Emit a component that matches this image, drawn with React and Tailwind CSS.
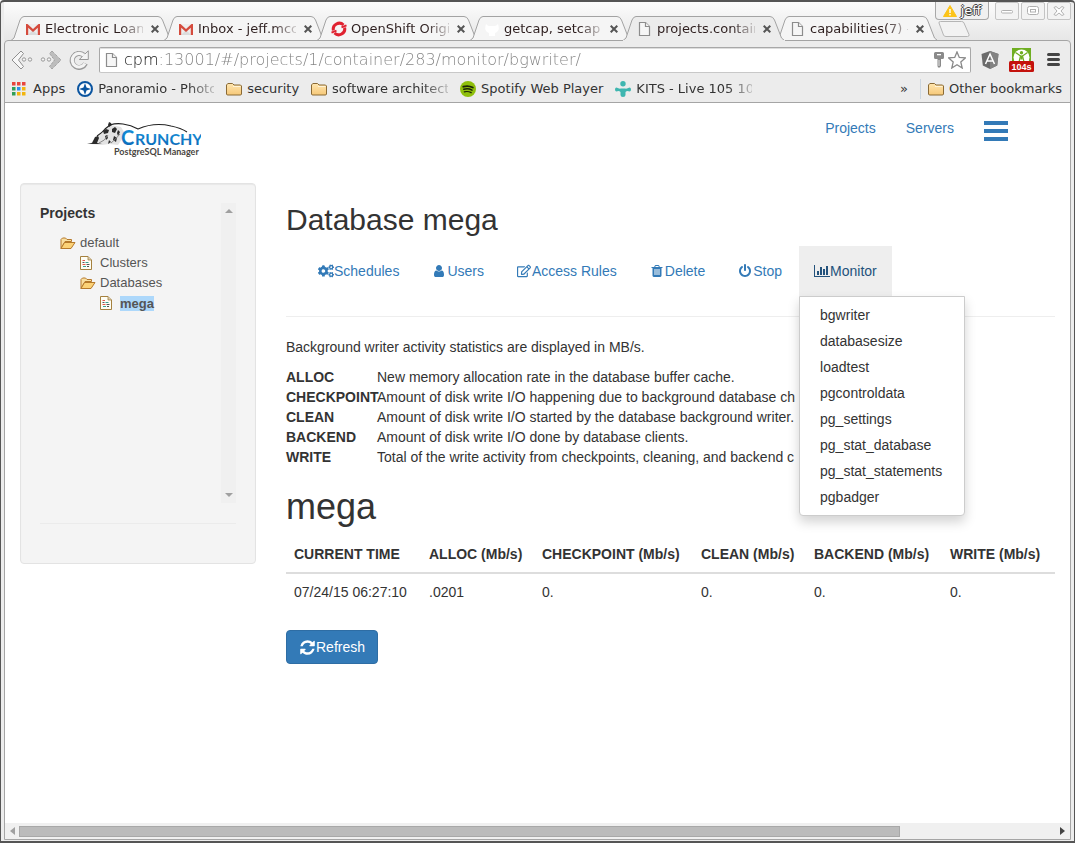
import React from "react";
import { FaCogs, FaRegEdit } from "react-icons/fa";

const UI = "font-['DejaVu_Sans',sans-serif]";

function FontIcon({ path, box = "0 0 1792 1792", className = "size-[14px]" }) {
  return (
    <svg viewBox={box} className={className} fill="currentColor" aria-hidden="true">
      <path d={path} />
    </svg>
  );
}

const USER =
  "M1536 1399q0 109-62.5 187t-150.5 78h-854q-88 0-150.5-78t-62.5-187q0-85 8.5-160.5t31.5-152 58.5-131 94-89 134.5-34.5q131 128 313 128t313-128q76 0 134.5 34.5t94 89 58.5 131 31.5 152 8.5 160.5zm-256-887q0 159-112.5 271.5t-271.5 112.5-271.5-112.5-112.5-271.5 112.5-271.5 271.5-112.5 271.5 112.5 112.5 271.5z";
const TRASH =
  "M704 1376v-704q0-14-9-23t-23-9h-64q-14 0-23 9t-9 23v704q0 14 9 23t23 9h64q14 0 23-9t9-23zm256 0v-704q0-14-9-23t-23-9h-64q-14 0-23 9t-9 23v704q0 14 9 23t23 9h64q14 0 23-9t9-23zm256 0v-704q0-14-9-23t-23-9h-64q-14 0-23 9t-9 23v704q0 14 9 23t23 9h64q14 0 23-9t9-23zm-544-992h448l-48-117q-7-9-17-11h-317q-10 2-17 11zm928 32v64q0 14-9 23t-23 9h-96v948q0 83-47 143.5t-113 60.5h-832q-66 0-113-58.5t-47-141.5v-952h-96q-14 0-23-9t-9-23v-64q0-14 9-23t23-9h309l70-167q15-37 54-63t79-26h320q40 0 79 26t54 63l70 167h309q14 0 23 9t9 23z";
const POWER =
  "M1664 896q0 156-61 298t-164 245-245 164-298 61-298-61-245-164-164-245-61-298q0-182 80.5-343t226.5-270q43-32 95.5-25t83.5 50q32 42 24.5 94.5t-49.5 84.5q-98 74-151.5 181t-53.5 228q0 104 40.5 198.5t109.5 163.5 163.5 109.5 198.5 40.5 198.5-40.5 163.5-109.5 109.5-163.5 40.5-198.5q0-121-53.5-228t-151.5-181q-42-32-49.5-84.5t24.5-94.5q31-43 84-50t95 25q146 109 226.5 270t80.5 343zm-640-768v640q0 52-38 90t-90 38-90-38-38-90v-640q0-52 38-90t90-38 90 38 38 90z";
const CHART =
  "M640 896v512h-256v-512h256zm384-512v1024h-256v-1024h256zm1024 1152v128h-2048v-1536h128v1408h1920zm-640-896v768h-256v-768h256zm384-384v1152h-256v-1152h256z";
const REFRESH =
  "M1639 1056q0 5-1 7-64 268-268 434.5t-478 166.5q-146 0-282.5-55t-243.5-157l-129 129q-19 19-45 19t-45-19-19-45v-448q0-26 19-45t45-19h448q26 0 45 19t19 45-19 45l-137 137q71 66 161 102t187 36q134 0 250-65t186-179q11-17 53-117 8-23 30-23h192q13 0 22.5 9.5t9.5 22.5zm25-800v448q0 26-19 45t-45 19h-448q-26 0-45-19t-19-45 19-45l138-138q-148-137-349-137-134 0-250 65t-186 179q-11 17-53 117-8 23-30 23h-199q-13 0-22.5-9.5t-9.5-22.5v-7q65-268 270-434.5t480-166.5q146 0 284 55.5t245 156.5l130-129q19-19 45-19t45 19 19 45z";

/* ---------- browser icons ---------- */

function Gmail() {
  return (
    <svg viewBox="0 0 16 16" className="size-4" aria-hidden="true">
      <path d="M1 3h14v11H1z" fill="#eee" />
      <path d="M3 14 8 9l5 5z" fill="#dcdcdc" />
      <path d="M1 14V3h1.5L8 8l5.5-5H15v11h-2.2V6.800L8 11 3.200 6.800V14z" fill="#d54b3d" />
    </svg>
  );
}

function OpenShift() {
  return (
    <svg viewBox="0 0 16 16" className="size-4" fill="none" stroke="#e02230" strokeWidth="3" aria-hidden="true">
      <path d="M2.4 9.5A6 6 0 0 1 12.5 4" />
      <path d="M13.6 6.5A6 6 0 0 1 3.5 12" />
      <path d="m10.5 6.4 5-2M.5 11.6l5-2" strokeWidth="2" />
    </svg>
  );
}

function Ghost() {
  return (
    <svg viewBox="0 0 16 16" className="size-4" aria-hidden="true">
      <path d="M2 3q2 2 3 2h6q1 0 3-2 2 5-1 8l-2 1v3H5v-3l-2-1Q0 8 2 3Z" fill="#fff" />
    </svg>
  );
}

function Page() {
  return (
    <svg viewBox="0 0 16 16" className="size-4 shrink-0" fill="#f6f6f6" stroke="#8c8c8c" strokeWidth="1.2" aria-hidden="true">
      <path d="M2.5 1.5h6l4 4v9h-10z" />
      <path d="M8.5 1.5v4h4" />
    </svg>
  );
}

function Folder() {
  return (
    <svg viewBox="0 0 16 16" className="size-4 shrink-0" aria-hidden="true">
      <defs>
        <linearGradient id="folderFill" x1="0" y1="0" x2="0" y2="1">
          <stop offset="0" stopColor="#ffe6b0" />
          <stop offset="1" stopColor="#f6c878" />
        </linearGradient>
      </defs>
      <path d="M.5 13V4l1.3-1.5h4.7L8 4h6.5l1 1v8l-.7 1H1.2z" fill="url(#folderFill)" stroke="#8a6a35" />
      <path d="M7 5.5h7.5" stroke="#fff3d6" />
    </svg>
  );
}

function AppsGrid() {
  const colors = ["#e8453c", "#e8453c", "#e8453c", "#2f9e58", "#2b8fe8", "#f2b50f", "#2f9e58", "#f2b50f", "#f2b50f"];
  return (
    <svg viewBox="0 0 16 14" className="h-[14px] w-4" aria-hidden="true">
      {colors.map((c, i) => (
        <rect key={i} x={(i % 3) * 5} y={Math.floor(i / 3) * 5} width="3.5" height="3.5" fill={c} />
      ))}
    </svg>
  );
}

function Compass() {
  return (
    <svg viewBox="0 0 16 16" className="size-4" aria-hidden="true">
      <circle cx="8" cy="8" r="7" fill="#fff" stroke="#0b55a0" strokeWidth="2" />
      <path d="m8 2 1.5 4.5L14 8 9.5 9.5 8 14 6.5 9.5 2 8l4.5-1.5z" fill="#0b55a0" />
    </svg>
  );
}

function Spotify() {
  return (
    <svg viewBox="0 0 16 16" className="size-4" fill="none" stroke="#1c2408" strokeLinecap="round" aria-hidden="true">
      <circle cx="8" cy="8" r="8" fill="#8fbf0c" stroke="none" />
      <path d="M3.3 5.7q5-1.5 9.5.8" strokeWidth="1.9" />
      <path d="M3.8 8.3q4.5-1.2 8.2.8" strokeWidth="1.5" />
      <path d="M4.3 10.8q3.8-.9 6.9.8" strokeWidth="1.2" />
    </svg>
  );
}

function Kits() {
  return (
    <svg viewBox="0 0 16 16" className="size-4" fill="#3fb6b0" aria-hidden="true">
      <circle cx="8" cy="2.7" r="2.7" />
      <path d="M1.5 6.5Q4 8 6 7.5h4q2 .5 4.500-1 1.500 0 1.500 2t-1.500 2Q12 9.500 10.500 11v3q0 2-2.500 2t-2.500-2v-3Q4 9.500 1.500 10.500 0 10.500 0 8.500t1.500-2Z" />
    </svg>
  );
}

function BackArrow({ flip }) {
  return (
    <svg viewBox="0 0 22 20" className={flip ? "h-5 w-[22px] -scale-x-100" : "h-5 w-[22px]"} aria-hidden="true">
      <path
        d="M10 1 1 10l9 9 2.500-2.500L7.500 10l5-6.500z"
        fill={flip ? "#bdbdbd" : "#f7f7f7"}
        stroke="#8f8f8f"
        strokeDasharray={flip ? "1 1" : undefined}
      />
      <g fill="#f5f5f5" stroke="#999">
        <circle cx="13" cy="9.500" r="1.700" />
        <circle cx="19" cy="9.500" r="1.700" />
      </g>
    </svg>
  );
}

function Reload() {
  return (
    <svg viewBox="0 0 20 20" className="size-5" fill="none" aria-hidden="true">
      <path d="M16.500 13.500A7 7 0 1 1 14.500 5" stroke="#999" strokeWidth="5" />
      <path d="M19.300.8v8.700h-9z" fill="#f4f4f4" stroke="#999" />
      <path d="M16 13.500A6.800 6.800 0 1 1 15 5.500" stroke="#f4f4f4" strokeWidth="3.200" />
    </svg>
  );
}

function KeyIcon() {
  return (
    <svg viewBox="0 0 10 16" className="h-4 w-[10px] shrink-0" aria-hidden="true">
      <path d="M0 1.500Q0 0 1.500 0h7Q10 0 10 1.500v4Q10 7 8.500 7H7v7l-1 1.500H4L3.500 14V7h-2Q0 7 0 5.500z" fill="#8a8a8a" />
      <path d="M3 2h4v1.300H3z" fill="#fff" />
      <path d="M5 8v6" stroke="#fff" strokeWidth=".8" />
    </svg>
  );
}

function Star() {
  return (
    <svg viewBox="0 0 18 18" className="size-[18px] shrink-0" aria-hidden="true">
      <path d="m9 .9 2.300 5.500 6 .5-4.500 4 1.400 6.100L9 13.700 3.800 17l1.400-6.100-4.500-4 6-.5z" fill="#fff" stroke="#8a8a8a" strokeWidth="1.300" />
    </svg>
  );
}

function AngularShield() {
  return (
    <svg viewBox="0 0 18 18" className="size-[18px]" aria-hidden="true">
      <path d="m9 0 8.500 3-1.300 11.500L9 18l-7.200-3.500L.5 3z" fill="#6b6b6b" />
      <path d="m9 0 8.500 3-1.300 11.500L9 18z" fill="#838383" />
      <path d="m4.500 13 4.500-10 4.500 10M6 10h6" fill="none" stroke="#fff" strokeWidth="1.500" />
    </svg>
  );
}

function TimerExtension() {
  return (
    <svg viewBox="0 0 26 24" className="h-6 w-[26px]" aria-hidden="true">
      <rect x="3" y="0" width="19" height="18" fill="#6fae22" />
      <circle cx="12.500" cy="9.500" r="8" fill="#fff" />
      <path d="m6.500 4.500 5 3.500-1.500 6M18.500 4.500l-5 3.500 1.500 6" fill="none" stroke="#6fae22" strokeWidth="1.200" />
      <path d="M11 7.500h3l-.5 4h-2z" fill="#6fae22" />
      <circle cx="12.500" cy="4.700" r="1.700" fill="#6fae22" />
      <rect x="0" y="13" width="25" height="11" rx="1.500" fill="#c4120d" />
      <text x="12.500" y="22" textAnchor="middle" fill="#fff" fontFamily="Liberation Sans, sans-serif" fontWeight="700" fontSize="9">
        104s
      </text>
    </svg>
  );
}

/* ---------- browser frame ---------- */

const tabs = [
  { icon: Gmail, title: "Electronic Loan" },
  { icon: Gmail, title: "Inbox - jeff.mcc" },
  { icon: OpenShift, title: "OpenShift Origi" },
  { icon: Ghost, title: "getcap, setcap" },
  { icon: Page, title: "projects.contain", active: true },
  { icon: Page, title: "capabilities(7) -" },
];

function Tab({ icon: Icon, title, active }) {
  return (
    <div role="tab" aria-selected={!!active} className={active ? "relative z-10 -mr-[9px] h-[25px] w-[162px]" : "relative -mr-[9px] h-[25px] w-[162px]"}>
      <svg viewBox="0 0 162 25" className="absolute inset-0 h-full w-full" aria-hidden="true">
        <path
          d="M0 24.500 3 22 9 4q1.500-3.500 4-3.500h134q3 0 4.500 3.500l7 18 3 2.500z"
          fill={active ? "#ececec" : "#f5f5f5"}
          stroke="#a3a3a3"
        />
        {active && <path d="M0 24.500h162" stroke="#ececec" />}
      </svg>
      <div className="relative flex h-full items-center pl-[14px]">
        <Icon />
        <span className="ml-1 w-[98px] whitespace-nowrap text-[13px] leading-5 text-[#2e1f1f] [mask-image:linear-gradient(to_right,black_75px,transparent_103px)]">
          {title}
        </span>
        <button aria-label="Close tab" className="ml-[6px] flex size-3 items-center justify-center text-[#555]">
          <svg viewBox="0 0 8 8" className="size-2" stroke="currentColor" strokeWidth="2" aria-hidden="true">
            <path d="m.7.700 6.600 6.600M7.300.700.700 7.300" />
          </svg>
        </button>
      </div>
    </div>
  );
}

function WindowButton({ label, children }) {
  return (
    <button aria-label={label} className="flex h-[18px] w-6 items-center justify-center rounded-[2px] border border-[#c4c4c4] bg-[#f3f3f3]">
      <svg viewBox="0 0 12 10" className="h-[10px] w-3" fill="#fff" stroke="#b0b0b0" aria-hidden="true">
        {children}
      </svg>
    </button>
  );
}

function TitleBar() {
  return (
    <div className="grid h-[39px] bg-linear-to-b from-[#fcfcfc] to-[#e6e6e6]">
      <div role="tablist" className="flex items-end self-end pl-[7px] [grid-area:1/1]">
        {tabs.map((t) => (
          <Tab key={t.title} {...t} />
        ))}
        <button aria-label="New tab" className="mb-1 ml-[9px]">
          <svg viewBox="0 0 32 16" className="h-4 w-8" aria-hidden="true">
            <path d="M1 2Q.5.500 2.500.500h21q2 0 2.500 1.500l5 11.500q.5 2-1.500 2H8q-2 0-2.500-1.500z" fill="#f2f2f2" stroke="#b5b5b5" />
          </svg>
        </button>
      </div>
      <div className="flex items-start gap-[2px] self-start justify-self-end [grid-area:1/1]">
        <button className="mr-1 flex h-[18px] w-[54px] items-center justify-center gap-1 rounded-b-[4px] border border-t-0 border-[#a8a8a8] bg-[#f0f0f0] text-[13px] leading-4 text-white [text-shadow:1px_0_#444,-1px_0_#444,0_1px_#444,0_-1px_#444]">
          <svg viewBox="0 0 14 12" className="h-3 w-[14px]" aria-hidden="true">
            <path d="M7 .5 13.500 11.500H.5z" fill="#fcc419" stroke="#fcc419" strokeLinejoin="round" />
            <path d="M7 4v4M7 9v1.500" stroke="#fff" strokeWidth="1.400" />
          </svg>
          jeff
        </button>
        <WindowButton label="Minimize">
          <rect x=".5" y="4.500" width="11" height="2.500" rx="1" />
        </WindowButton>
        <WindowButton label="Maximize">
          <rect x=".5" y=".5" width="11" height="8" rx="2" />
          <rect x="3.500" y="3.500" width="5" height="2.500" />
        </WindowButton>
        <WindowButton label="Close">
          <path d="m1 1.500 2-1 3 2.500 3-2.500 2 1L8 5l3 3.500-2 1L6 7 3 9.500l-2-1L4 5z" />
        </WindowButton>
      </div>
    </div>
  );
}

function Toolbar() {
  return (
    <div className="flex h-[37px] items-center pl-[6px] pr-[10px]">
      <button aria-label="Back"><BackArrow /></button>
      <button aria-label="Forward" className="ml-[7px]"><BackArrow flip /></button>
      <button aria-label="Reload" className="ml-[7px]"><Reload /></button>
      <div className="ml-[10px] flex h-[26px] min-w-0 flex-1 items-center gap-1 rounded-[2px] border border-[#a8a8a8] border-b-[#c8c8c8] bg-white px-1 shadow-[inset_0_1px_#ddd]">
        <Page />
        <input
          aria-label="Address"
          defaultValue="cpm:13001/#/projects/1/container/283/monitor/bgwriter/"
          className="min-w-0 flex-1 bg-[linear-gradient(to_right,#111_34px,#808080_34px)] bg-clip-text font-['DejaVu_Sans_Light','DejaVu_Sans',sans-serif] text-[16px] font-extralight leading-5 text-transparent outline-none"
        />
        <KeyIcon />
        <Star />
      </div>
      <button aria-label="AngularJS" className="ml-[10px]"><AngularShield /></button>
      <button aria-label="Timer" className="ml-[10px]"><TimerExtension /></button>
      <button aria-label="Menu" className="ml-3">
        <svg viewBox="0 0 13 13" className="size-[13px]" stroke="#444" strokeWidth="3" strokeLinecap="round" aria-hidden="true">
          <path d="M1.500 1.500h10M1.500 6.500h10M1.500 11.500h10" />
        </svg>
      </button>
    </div>
  );
}

const bookmarks = [
  { icon: AppsGrid, name: "Apps" },
  { icon: Compass, name: "Panoramio - Photo", fade: true },
  { icon: Folder, name: "security" },
  { icon: Folder, name: "software architectu", fade: true },
  { icon: Spotify, name: "Spotify Web Player" },
  { icon: Kits, name: "KITS - Live 105 105", fade: true },
];

function BookmarksBar() {
  return (
    <nav aria-label="Bookmarks" className="flex h-[25px] items-center gap-3 border-b border-[#a5a5a5] pl-[7px] pr-2 pb-[3px] text-[13px] leading-5 text-[#333]">
      {bookmarks.map(({ icon: Icon, name, fade }) => (
        <a key={name} href="#bookmark" className="flex items-center gap-[5px] whitespace-nowrap">
          <Icon />
          <span className={fade ? "w-[116px] [mask-image:linear-gradient(to_right,black_90px,transparent_124px)]" : ""}>{name}</span>
        </a>
      ))}
      <button aria-label="More bookmarks" className="ml-auto">»</button>
      <a href="#other" className="flex items-center gap-[5px] whitespace-nowrap border-l border-[#ccd6e0] pl-[7px]">
        <Folder />
        Other bookmarks
      </a>
    </nav>
  );
}

/* ---------- page ---------- */

function Logo() {
  return (
    <svg viewBox="0 0 114 36" className="h-9 w-[114px]" role="img" aria-label="Crunchy PostgreSQL Manager">
      <defs>
        <linearGradient id="crunchy" x1="0" y1="0" x2="0" y2="1">
          <stop offset="0" stopColor="#1795dd" />
          <stop offset="1" stopColor="#0a66b5" />
        </linearGradient>
      </defs>
      <path d="M3 22 10 14l7-4 2-4 3-3 7 1 5 1 3 5-2 7-4 6-9-1-7 1z" fill="#e3e3e3" />
      <path d="m0 22 5-1 3-6 3-1 1 2-2 5 5 1H0ZM16 9l3-2 3 1-1 3-4 1zM21 3l1-3 2 1 1 2-3 2ZM25 7l3-2 2 2-2 4-3-1zM18 14l2-1 1 3-2 2zM27 14l3 2-1 4-3-2zM31 8l2 2-2 4-1-3zM22 18l2 2-3 2z" fill="#2b2b2b" />
      <path d="M10 14q5-3 8-7l5-4q6-2 13-1 8 1 15 5Q67 0 84 4q10 2 16 6" fill="none" stroke="#222" strokeWidth="1.100" />
      <path d="M12 21q6-2 9-8M24 21q4-3 9-9" fill="none" stroke="#888" />
      <text x="34" y="23" fill="url(#crunchy)" fontFamily="Lato, sans-serif" fontWeight="700" fontSize="20">C</text>
      <text x="48" y="23" fill="url(#crunchy)" fontFamily="Lato, sans-serif" fontWeight="700" fontSize="16">RUNCHY</text>
      <text x="27" y="33" fill="#4a4642" fontFamily="Lato, sans-serif" fontWeight="700" fontSize="9">PostgreSQL Manager</text>
    </svg>
  );
}

function OpenFolder() {
  return (
    <svg viewBox="0 0 16 13" className="h-[13px] w-4" aria-hidden="true">
      <path d="M1 11.500V2.500l1.500-1.500h3L7 2.500h4.500v2H5z" fill="#f9dfa0" stroke="#b5792b" />
      <path d="M1 11.500 4.500 5.500H15L11 11.500z" fill="#fbd277" stroke="#b5792b" strokeLinejoin="round" />
    </svg>
  );
}

function Leaf() {
  return (
    <svg viewBox="0 0 12 14" className="h-[14px] w-3" aria-hidden="true">
      <path d="M.5.500H8L11.500 4v9.500H.5z" fill="#fffef5" stroke="#a5813f" />
      <path d="M8 .5V4h3.500" fill="#d8ccb0" stroke="#a5813f" strokeWidth=".8" />
      <path d="M2.500 4.500H5M2.500 8.500h3" stroke="#e2574c" />
      <path d="M5.500 6.500h3M3 10.500h3" stroke="#3ba18f" />
      <path d="M6.500 8.500h3M7 10.500h2M2.500 6.500h2" stroke="#555" />
    </svg>
  );
}

function Sidebar() {
  return (
    <aside className="w-[236px] shrink-0 rounded-[4px] border border-[#e3e3e3] bg-[#f4f4f4] p-[19px] shadow-[inset_0_1px_1px_rgba(0,0,0,0.05)]">
      <div className="flex h-[300px]">
        <div className="flex-1">
          <h2 className="text-[14px] font-bold leading-5">Projects</h2>
          <ul className="mt-[10px] pl-5 text-[13px] leading-5 text-[#555]">
            <li>
              <span className="flex items-center gap-1"><OpenFolder />default</span>
              <ul className="pl-5">
                <li className="flex h-5 items-center gap-2"><Leaf />Clusters</li>
                <li>
                  <span className="flex items-center gap-1"><OpenFolder />Databases</span>
                  <ul className="pl-5">
                    <li className="flex h-5 items-center gap-2">
                      <Leaf />
                      <span className="bg-[#add8fb] font-bold leading-[15px]">mega</span>
                    </li>
                  </ul>
                </li>
              </ul>
            </li>
          </ul>
        </div>
        <div className="flex w-[15px] flex-col items-center justify-between bg-[#f0f0f0] py-[6px]">
          <svg viewBox="0 0 8 4" className="h-1 w-2" aria-hidden="true"><path d="m0 4 4-4 4 4z" fill="#a0a0a0" /></svg>
          <svg viewBox="0 0 8 4" className="h-1 w-2" aria-hidden="true"><path d="m0 0 4 4 4-4z" fill="#a0a0a0" /></svg>
        </div>
      </div>
      <hr className="my-5 border-[#ebebeb]" />
    </aside>
  );
}

const actions = [
  { name: "Schedules", icon: <FaCogs className="size-4" /> },
  { name: "Users", icon: <FontIcon path={USER} /> },
  { name: "Access Rules", icon: <FaRegEdit className="size-[14px]" /> },
  { name: "Delete", icon: <FontIcon path={TRASH} /> },
  { name: "Stop", icon: <FontIcon path={POWER} /> },
];

const monitors = [
  "bgwriter",
  "databasesize",
  "loadtest",
  "pgcontroldata",
  "pg_settings",
  "pg_stat_database",
  "pg_stat_statements",
  "pgbadger",
];

const terms = [
  ["ALLOC", "New memory allocation rate in the database buffer cache."],
  ["CHECKPOINT", "Amount of disk write I/O happening due to background database ch"],
  ["CLEAN", "Amount of disk write I/O started by the database background writer."],
  ["BACKEND", "Amount of disk write I/O done by database clients."],
  ["WRITE", "Total of the write activity from checkpoints, cleaning, and backend c"],
];

const columns = [
  { name: "CURRENT TIME", width: "w-[135px]", value: "07/24/15 06:27:10" },
  { name: "ALLOC (Mb/s)", width: "w-[113px]", value: ".0201" },
  { name: "CHECKPOINT (Mb/s)", width: "w-[159px]", value: "0." },
  { name: "CLEAN (Mb/s)", width: "w-[113px]", value: "0." },
  { name: "BACKEND (Mb/s)", width: "w-[136px]", value: "0." },
  { name: "WRITE (Mb/s)", width: "", value: "0." },
];

function ActionBar() {
  return (
    <ul className="mt-[10px] flex gap-[2px] pl-[17px] text-[#337ab7]">
      {actions.map(({ name, icon }) => (
        <li key={name}>
          <a href="#action" className="flex h-[50px] items-center whitespace-nowrap px-[15px]">
            <span className="flex w-4 justify-center">{icon}</span>
            {name}
          </a>
        </li>
      ))}
      <li className="relative">
        <button aria-expanded="true" className="flex h-[50px] items-center bg-[#eee] px-[15px] text-[#23527c]">
          <span className="flex w-4 justify-center">
            <FontIcon path={CHART} box="0 0 2048 1792" className="h-[14px] w-4" />
          </span>
          Monitor
        </button>
        <ul className="absolute left-0 top-full z-10 min-w-[166px] rounded-b-[4px] border border-[#ccc] bg-white py-[5px] text-[#333] shadow-[0_6px_12px_rgba(0,0,0,0.175)]">
          {monitors.map((m) => (
            <li key={m}>
              <a href="#monitor" className="block whitespace-nowrap px-5 py-[3px]">{m}</a>
            </li>
          ))}
        </ul>
      </li>
    </ul>
  );
}

function Main() {
  return (
    <main className="min-w-0 flex-1 pt-5">
      <h1 className="text-[30px] leading-[33px]">Database mega</h1>
      <ActionBar />
      <hr className="mt-5 border-[#eee]" />
      <p className="mt-5">Background writer activity statistics are displayed in MB/s.</p>
      <dl className="mt-[10px] grid grid-cols-[91px_1fr]">
        {terms.map(([t, d]) => (
          <React.Fragment key={t}>
            <dt className="font-bold">{t}</dt>
            <dd className="whitespace-nowrap">{d}</dd>
          </React.Fragment>
        ))}
      </dl>
      <h2 className="mt-5 text-[36px] leading-10">mega</h2>
      <table className="mt-[9px] w-full table-fixed text-left">
        <thead>
          <tr className="border-b-2 border-[#ddd]">
            {columns.map((c) => (
              <th key={c.name} className={`${c.width} whitespace-nowrap p-2 font-bold`}>{c.name}</th>
            ))}
          </tr>
        </thead>
        <tbody>
          <tr>
            {columns.map((c) => (
              <td key={c.name} className="whitespace-nowrap p-2">{c.value}</td>
            ))}
          </tr>
        </tbody>
      </table>
      <button className="mt-5 flex h-[34px] items-center rounded-[4px] border border-[#2e6da4] bg-[#337ab7] px-3 text-white">
        <FontIcon path={REFRESH} className="size-[17px]" />
        Refresh
      </button>
    </main>
  );
}

export default function App() {
  return (
    <div className={`flex min-h-screen flex-col rounded-t-[4px] border-x border-b-2 border-t-2 border-[#555] bg-[#ececec] px-[3px] pb-px ${UI}`}>
      <TitleBar />
      <div className="-mt-px flex flex-1 flex-col rounded-t-[4px] border border-[#a5a5a5] bg-[#ececec]">
        <Toolbar />
        <BookmarksBar />
        <div className="flex flex-1 flex-col bg-white px-[15px] font-['Liberation_Sans',sans-serif] text-[14px] leading-5 text-[#333]">
          <header className="flex h-20 items-start justify-between pl-[67px] pr-[47px] pt-[15px]">
            <a href="#home" className="pt-1"><Logo /></a>
            <nav className="flex items-start gap-[30px] text-[#337ab7]">
              <a href="#projects">Projects</a>
              <a href="#servers">Servers</a>
              <button aria-label="Toggle menu" className="pt-[3px]">
                <svg viewBox="0 0 24 20" className="h-5 w-6" fill="currentColor" aria-hidden="true">
                  <path d="M0 0h24v4H0zM0 8h24v4H0zM0 16h24v4H0z" />
                </svg>
              </button>
            </nav>
          </header>
          <div className="flex items-start gap-[30px]">
            <Sidebar />
            <Main />
          </div>
        </div>
        <div className="flex h-4 items-center gap-1 bg-[#f0f0f0] px-[5px]">
          <svg viewBox="0 0 5 8" className="h-2 w-[5px]" aria-hidden="true"><path d="M5 0v8L0 4z" fill="#a0a0a0" /></svg>
          <div className="flex-1">
            <div className="h-[11px] w-[85%] border border-[#a8a8a8] bg-[#bbb]" />
          </div>
          <svg viewBox="0 0 5 8" className="h-2 w-[5px]" aria-hidden="true"><path d="M0 0v8l5-4z" fill="#444" /></svg>
        </div>
      </div>
    </div>
  );
}
